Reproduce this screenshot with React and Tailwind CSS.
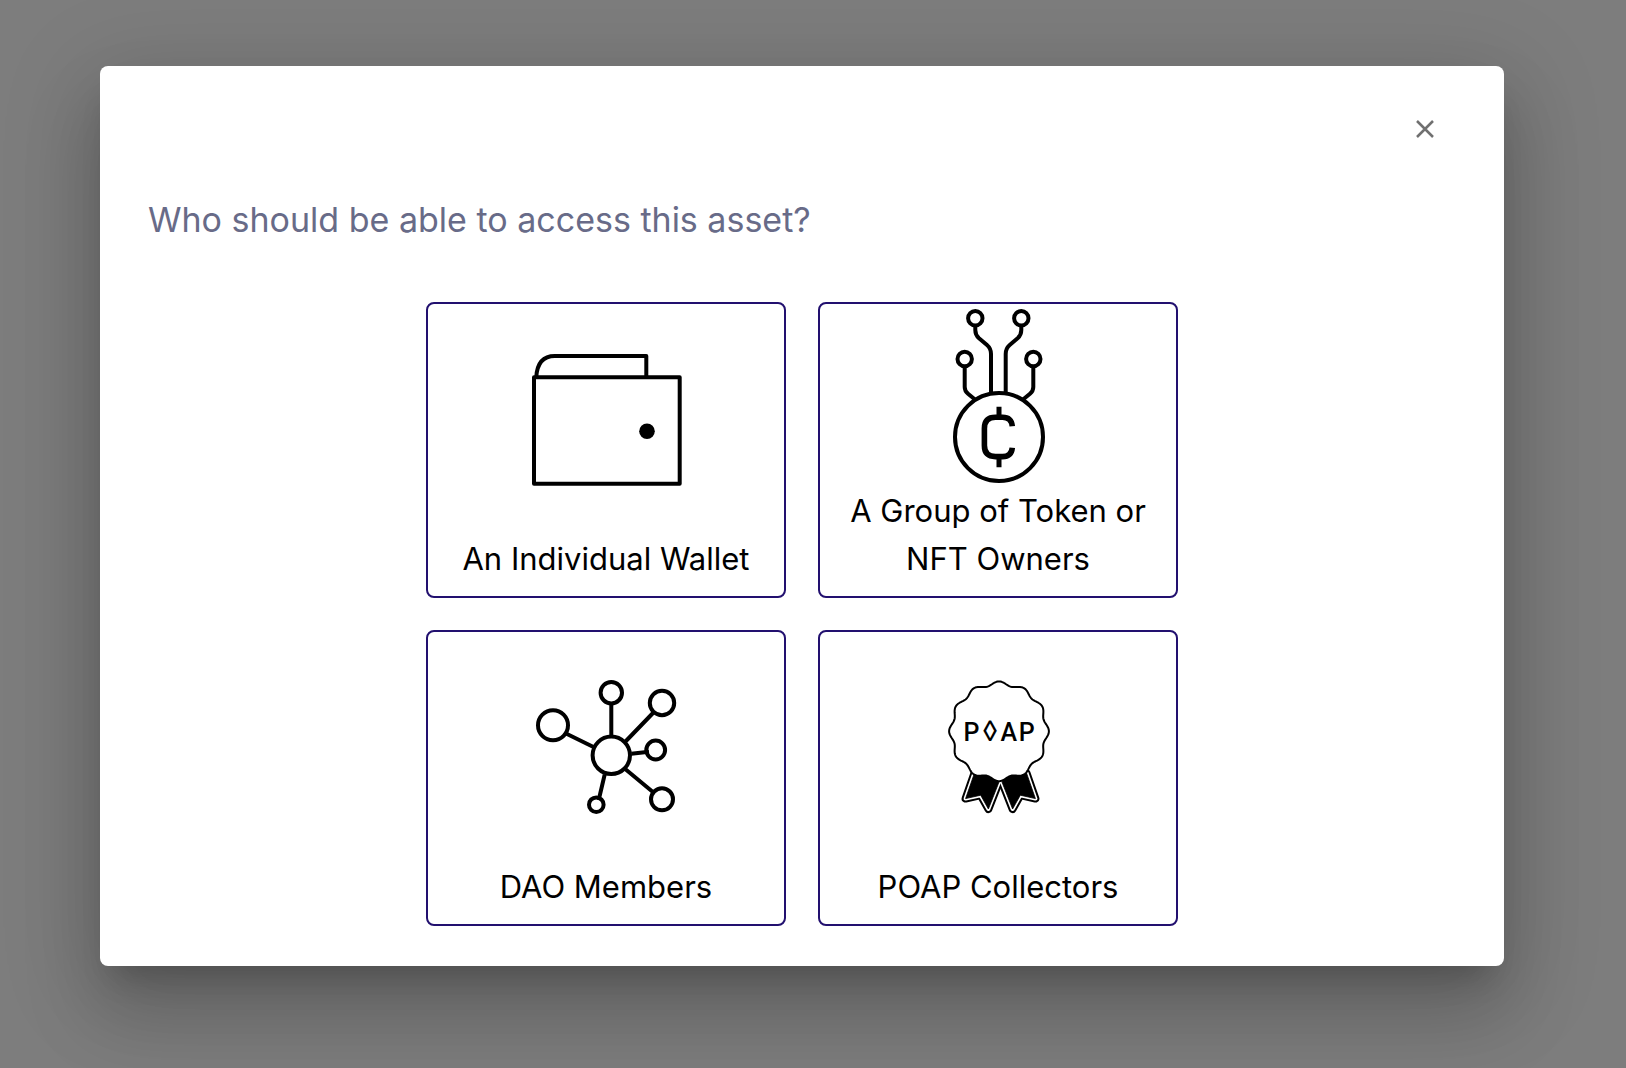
import React from "react";

function WalletIcon() {
  return (
    <svg viewBox="0 0 180 180" className="size-[180px]" fill="none" stroke="#000" strokeWidth="4" aria-hidden="true">
      <path d="M20.3 48C21 36 26 27 38.7 27H130.3V48" strokeLinejoin="round" />
      <path d="M18 48.3H163.7V154.7H18Z" strokeLinejoin="round" />
      <circle cx="131" cy="102.3" r="7.8" fill="#000" stroke="none" />
    </svg>
  );
}

function TokenIcon() {
  return (
    <svg viewBox="0 0 180 180" className="size-[180px]" fill="none" stroke="#000" strokeWidth="4" aria-hidden="true">
      <circle cx="91" cy="132" r="44" />
      <circle cx="67.3" cy="13.3" r="7.2" />
      <circle cx="113.3" cy="13.3" r="7.2" />
      <circle cx="56.7" cy="54" r="7.2" />
      <circle cx="125.3" cy="54" r="7.2" />
      <path d="M67.3 21V25Q67.3 30 71 33.3L79 40Q83 43.5 83 49V88" />
      <path d="M113.3 21V25Q113.3 30 109.6 33.3L101.7 40Q97.7 43.5 97.7 49V88" />
      <path d="M56.7 62V82Q56.7 86 60 88.8L67 94.5" />
      <path d="M125.3 62V82Q125.3 86 122 88.8L115 94.5" />
      <path d="M104.3 121.3Q103.4 112.3 94.5 112.3H87.5Q76.4 112.3 76.4 123.4V140.6Q76.4 151.6 87.5 151.6H94.5Q103.4 151.6 104.3 142.7" strokeWidth="5.6" />
      <path d="M91 101.7V112M91 152V162.3" strokeWidth="5" />
    </svg>
  );
}

function DaoIcon() {
  return (
    <svg viewBox="0 0 180 180" className="size-[180px]" fill="none" stroke="#000" strokeWidth="4" aria-hidden="true">
      <circle cx="95.3" cy="98.3" r="18.7" />
      <circle cx="95.3" cy="35.7" r="10.7" />
      <circle cx="146" cy="46" r="12.2" />
      <circle cx="37" cy="68.3" r="15" />
      <circle cx="139.7" cy="93" r="9.4" />
      <circle cx="146" cy="142.3" r="11" />
      <circle cx="80.3" cy="147.7" r="7.3" />
      <path d="M95.3 47V79M137 56L109.5 84.5M50.5 76.8L78 90.3M115.3 96.7L133 94.7M109.5 112.3L137.5 135.5M88.7 117.5L82.7 143" />
    </svg>
  );
}

const scallop =
  Array.from({ length: 240 }, (_, i) => {
    const a = (i / 240) * Math.PI * 2;
    const r = 48 + 1.9 * Math.cos(12 * a);
    return `${i ? "L" : "M"}${(91 + r * Math.sin(a)).toFixed(2)} ${(74.3 - r * Math.cos(a)).toFixed(2)}`;
  }).join("") + "Z";

const ribbon = "M66.5 116L57.6 141.6L72.7 138.2L80.4 152L91 125L80 112Z";
const mirror = "translate(185 0) scale(-1 1)";

function PoapIcon() {
  return (
    <svg viewBox="0 0 180 180" className="size-[180px]" strokeLinejoin="round" aria-hidden="true">
      <g fill="none" stroke="#000" strokeWidth="8">
        <path d={ribbon} />
        <path d={ribbon} transform={mirror} />
      </g>
      <g fill="#000" stroke="#fff" strokeWidth="4">
        <path d={ribbon} />
        <path d={ribbon} transform={mirror} />
      </g>
      <g fill="#000" stroke="#000" strokeWidth="0.8">
        <path d={ribbon} />
        <path d={ribbon} transform={mirror} />
      </g>
      <path d={scallop} fill="#fff" stroke="#000" strokeWidth="2" />
      <text x="55.6 74.8 92.6 110.8" y="84" fontSize="25" fontWeight="500" fontFamily="Roboto, sans-serif">
        P<tspan fontSize="29" fontWeight="400">◊</tspan>AP
      </text>
    </svg>
  );
}

const options = [
  { label: "An Individual Wallet", Icon: WalletIcon },
  { label: "A Group of Token or NFT Owners", Icon: TokenIcon },
  { label: "DAO Members", Icon: DaoIcon },
  { label: "POAP Collectors", Icon: PoapIcon },
];

function OptionCard({ label, Icon }) {
  return (
    <button
      type="button"
      className="flex h-[296px] cursor-pointer flex-col items-center rounded-lg border-2 border-[#22106f] bg-white px-4 pb-[13px] text-black"
    >
      <span className="flex flex-1 items-center justify-center pb-px">
        <Icon />
      </span>
      <span className="text-center text-[31px] leading-[48px]">{label}</span>
    </button>
  );
}

export default function App() {
  return (
    <div className="min-h-screen overflow-hidden bg-[#7d7d7d] pt-[66px] pr-[122px] pb-[102px] pl-[100px] font-['Inter',sans-serif]">
      <section
        role="dialog"
        aria-labelledby="dialog-title"
        className="rounded-lg bg-white px-12 pt-8 pb-10 shadow-[0_22px_30px_-14px_rgba(0,0,0,0.2),0_48px_76px_6px_rgba(0,0,0,0.14),0_18px_92px_16px_rgba(0,0,0,0.12)]"
      >
        <div className="flex justify-end">
          <button type="button" aria-label="Close" className="flex size-[62px] cursor-pointer items-center justify-center rounded-full">
            <svg viewBox="0 0 18 18" className="size-[18px]" stroke="#707070" strokeWidth="2.5" aria-hidden="true">
              <path d="M1 1L17 17M17 1L1 17" />
            </svg>
          </button>
        </div>
        <h1 id="dialog-title" className="mt-8 text-[34px] leading-[56px] text-[#686b88]">
          Who should be able to access this asset?
        </h1>
        <div className="mt-[54px] grid grid-cols-[360px_360px] justify-center gap-8">
          {options.map((option) => (
            <OptionCard key={option.label} {...option} />
          ))}
        </div>
      </section>
    </div>
  );
}
